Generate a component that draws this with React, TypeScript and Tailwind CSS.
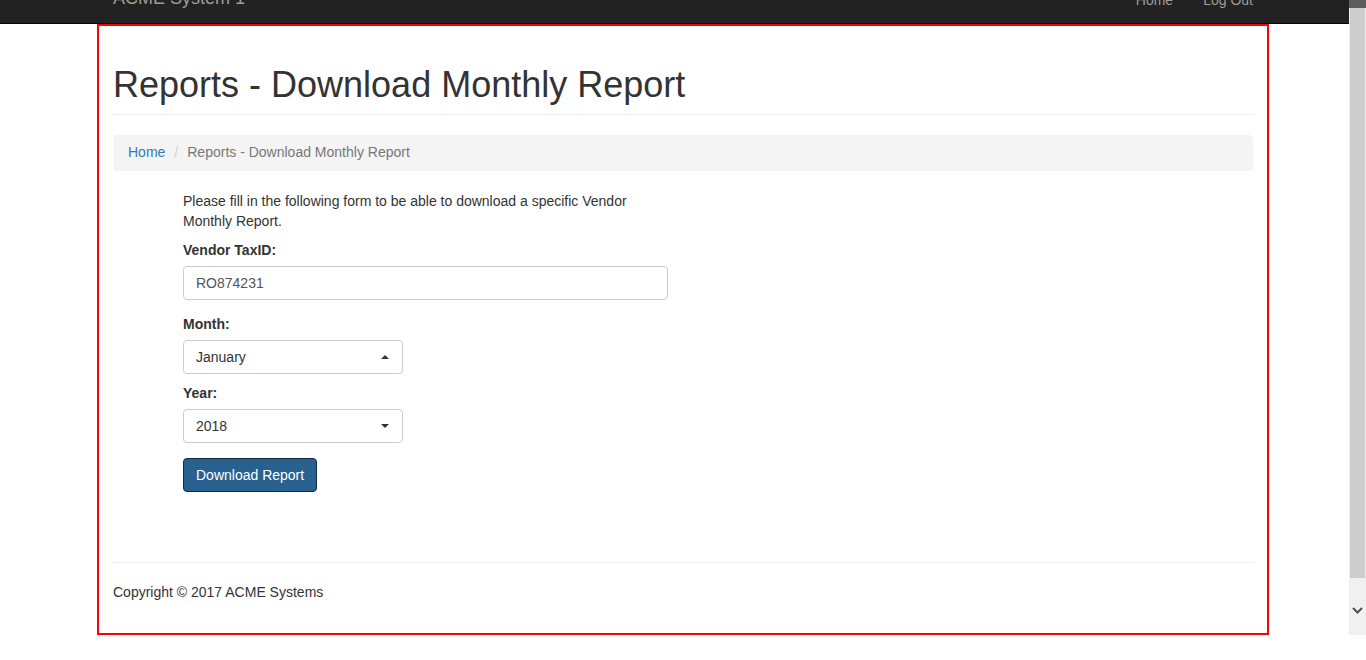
import React from "react";

const font = { fontFamily: '"Liberation Sans", Arial, Helvetica, sans-serif' };

function Caret({ up }: { up?: boolean }) {
  return (
    <svg width="8" height="4" viewBox="0 0 8 4" className="shrink-0">
      {up ? <polygon points="0,4 8,4 4,0" fill="#333" /> : <polygon points="0,0 8,0 4,4" fill="#333" />}
    </svg>
  );
}

function SelectBox({ value, up }: { value: string; up?: boolean }) {
  return (
    <div className="w-[220px] h-[34px] border border-[#ccc] rounded-[4px] bg-white flex items-center justify-between pl-[12px] pr-[13px] text-[14px] text-[#333]">
      <span>{value}</span>
      <Caret up={up} />
    </div>
  );
}

function Scrollbar() {
  return (
    <div className="w-[17px] h-[635px] bg-[#f0f0f0] flex flex-col shrink-0">
      <div className="h-[8px] bg-[#5c5c5c]" />
      <div className="h-[570px] bg-[#cdcdcd] mx-[1px]" />
      <div className="flex-1 flex items-start justify-center pt-[29px]">
        <svg width="11" height="7" viewBox="0 0 11 7">
          <path d="M1 1 L5.5 5.5 L10 1" stroke="#505050" strokeWidth="2" fill="none" />
        </svg>
      </div>
    </div>
  );
}

export default function App() {
  return (
    <div className="w-[1366px] h-[660px] overflow-hidden bg-white flex items-start" style={font}>
      <div className="w-[1349px] shrink-0">
        <nav className="mt-[-27px] h-[51px] bg-[#222] border-b border-[#080808]">
          <div className="w-[1140px] ml-[113px] flex justify-between">
            <span className="pt-[15px] leading-[20px] text-[18px] text-[#9d9d9d]">ACME System 1</span>
            <div className="flex text-[14px] text-[#9d9d9d] mr-[-15px]">
              <span className="px-[15px] pt-[17px] leading-[20px]">Home</span>
              <span className="px-[15px] pt-[17px] leading-[20px]">Log Out</span>
            </div>
          </div>
        </nav>

        <div className="ml-[97px] w-[1172px] h-[611px] border-2 border-[#ff0000] px-[14px] pt-[39px]">
          <div className="border-b border-[#eee] pb-[9px]">
            <h1 className="text-[36px] leading-[39.6px] text-[#333]">Reports - Download Monthly Report</h1>
          </div>

          <div className="mt-[20px] h-[36px] bg-[#f4f4f4] rounded-[4px] px-[15px] flex items-center text-[14px]">
            <span className="text-[#337ab7]">Home</span>
            <span className="text-[#ccc] pl-[9px] pr-[9px]">/</span>
            <span className="text-[#777]">Reports - Download Monthly Report</span>
          </div>

          <div className="ml-[70px] w-[485px] mt-[20px] text-[14px] leading-[20px] text-[#333]">
            <p>Please fill in the following form to be able to download a specific Vendor Monthly Report.</p>

            <label className="block font-bold mt-[9px] mb-[6px]">Vendor TaxID:</label>
            <div className="h-[34px] border border-[#ccc] rounded-[4px] flex items-center px-[12px] text-[#555]">RO874231</div>

            <label className="block font-bold mt-[14px] mb-[6px]">Month:</label>
            <SelectBox value="January" up />

            <label className="block font-bold mt-[9px] mb-[6px]">Year:</label>
            <SelectBox value="2018" />

            <button className="mt-[15px] h-[34px] px-[12px] bg-[#286090] border border-[#122b40] rounded-[4px] text-white text-[14px]">
              Download Report
            </button>
          </div>

          <div className="mt-[70px] border-t border-[#eee]" />
          <p className="mt-[19px] text-[14px] leading-[20px] text-[#333]">Copyright © 2017 ACME Systems</p>
        </div>
      </div>
      <Scrollbar />
    </div>
  );
}
